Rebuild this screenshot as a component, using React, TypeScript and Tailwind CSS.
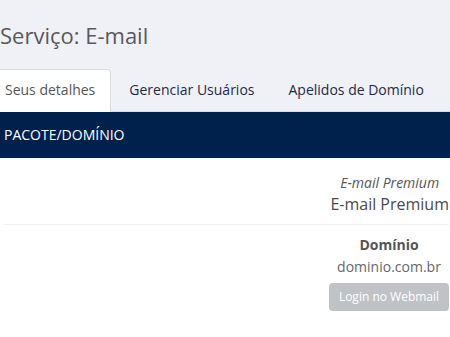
import React from "react";

export default function App() {
  return (
    <div className="w-[450px] h-[337px] overflow-hidden bg-white font-['Open_Sans',sans-serif]">
      <div className="-ml-[11px] w-[475px]">
        <div className="bg-[#f0f1f6]">
          <h1 className="pl-[11px] pt-[18px] pb-[17px] text-[22px] leading-[34px] text-[#58595b] font-normal">
            Serviço: E-mail
          </h1>
          <ul className="flex border-b border-[#dddddd] text-[14px] leading-[20px]">
            <li className="-mb-px mr-[2px] px-[15px] py-[10px] bg-white border border-[#dddddd] border-b-transparent rounded-t-[4px] text-[#555555]">
              Seus detalhes
            </li>
            <li className="mr-[2px] px-[15px] py-[10px] text-[#1c2a44] border border-transparent">
              Gerenciar Usuários
            </li>
            <li className="mr-[2px] px-[15px] py-[10px] text-[#1c2a44] border border-transparent">
              Apelidos de Domínio
            </li>
          </ul>
        </div>
        <div className="bg-[#00214b] px-[15px] py-[13px] text-white text-[14px] leading-[20px] font-medium">
          PACOTE/DOMÍNIO
        </div>
        <div className="px-[15px] pt-[15px]">
          <div className="flex justify-end border-b border-[#eeeeee] pb-[9px]">
            <div className="text-center text-[#555555]">
              <div className="italic text-[14px] leading-[20px]">E-mail Premium</div>
              <div className="text-[16px] leading-[22px] text-[#4a4a4a]">E-mail Premium</div>
            </div>
          </div>
          <div className="flex justify-end pt-[9px]">
            <div className="flex flex-col items-center text-center">
              <div className="font-bold text-[14px] leading-[22px] text-[#555555]">Domínio</div>
              <div className="text-[14px] leading-[22px] text-[#666666]">dominio.com.br</div>
              <button className="mt-[5px] w-[120px] h-[28px] rounded-[4px] bg-[#bfc2c6] text-white text-[12px] leading-[18px]">
                Login no Webmail
              </button>
            </div>
          </div>
        </div>
      </div>
    </div>
  );
}
